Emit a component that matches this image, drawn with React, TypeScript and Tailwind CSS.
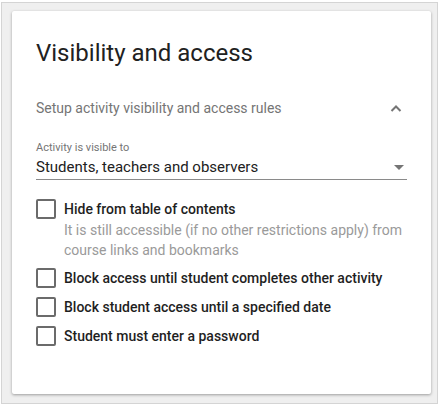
import React from "react";

const rows = [
  { label: "Hide from table of contents", help: "It is still accessible (if no other restrictions apply) from course links and bookmarks" },
  { label: "Block access until student completes other activity" },
  { label: "Block student access until a specified date" },
  { label: "Student must enter a password" },
];

function Check({ label, help }: { label: string; help?: string }) {
  return (
    <label className="flex items-start gap-[8px]">
      <span className="mt-[1px] h-[20px] w-[20px] shrink-0 rounded-[2px] border-2 border-[#6b6b6b] bg-white" />
      <span className="flex flex-col">
        <span className="text-[14px] leading-[22px] font-medium text-[#1f1f1f]">{label}</span>
        {help && <span className="text-[14px] leading-[20px] text-[#9a9a9a]">{help}</span>}
      </span>
    </label>
  );
}

export default function App() {
  return (
    <div className="h-[407px] w-[442px] bg-white p-[1px] pt-[2px]" style={{ fontFamily: "Roboto, 'Liberation Sans', sans-serif" }}>
      <div className="h-[402px] w-[437px] border border-[#d4d4d4] bg-[#efefef] px-[10px] pt-[8px]">
        <div className="h-[383px] w-[419px] rounded-[2px] bg-white px-[24px] pt-[26px] shadow-[0_1px_3px_rgba(0,0,0,0.35)]">
          <h1 className="text-[24px] leading-[32px] text-[#212121]">Visibility and access</h1>
          <div className="mt-[29px] flex items-center justify-between pr-[4px]">
            <span className="text-[14px] leading-[20px] text-[#757575]">Setup activity visibility and access rules</span>
            <svg width="12" height="8" viewBox="0 0 12 8" className="mr-[1px]">
              <path d="M1.5 7 L6 2.5 L10.5 7" stroke="#757575" strokeWidth="2" fill="none" />
            </svg>
          </div>
          <div className="mt-[23px]">
            <div className="text-[11px] leading-[14px] text-[#757575]">Activity is visible to</div>
            <div className="mt-[2px] flex items-center justify-between border-b border-[#8a8a8a] pb-[2px] pr-[3px]">
              <span className="text-[15px] leading-[20px] text-[#212121]">Students, teachers and observers</span>
              <svg width="10" height="5" viewBox="0 0 10 5">
                <path d="M0 0 L10 0 L5 5 Z" fill="#757575" />
              </svg>
            </div>
          </div>
          <div className="mt-[18px] flex flex-col gap-[7px]">
            {rows.map((r) => (
              <Check key={r.label} label={r.label} help={r.help} />
            ))}
          </div>
        </div>
      </div>
    </div>
  );
}
